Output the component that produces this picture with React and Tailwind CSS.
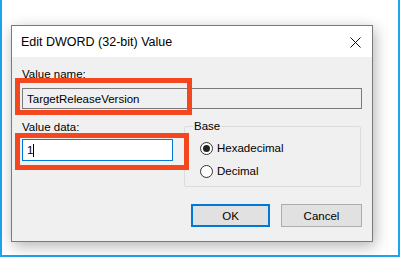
import React from "react";

function Radio({ checked, label }) {
  return (
    <div className="flex items-center h-[20px] gap-[4px]">
      <span className="w-[13px] h-[13px] rounded-full border border-[#333] bg-white flex items-center justify-center">
        {checked && <span className="w-[7px] h-[7px] rounded-full bg-[#222]" />}
      </span>
      <span>{label}</span>
    </div>
  );
}

export default function App() {
  return (
    <div
      className="relative w-[400px] h-[257px] bg-white border-l-2 border-r-2 border-b-2 border-[#1ea4e8] pl-[9px] pt-[25px] text-black text-[11.5px] leading-[14px]"
      style={{ fontFamily: '"Liberation Sans", Arial, sans-serif' }}
    >
      <div className="w-[362px] h-[217px] border border-[#7a7a7a] flex flex-col shadow-[2px_4px_14px_rgba(0,0,0,0.3)]">
        {/* title bar */}
        <div className="h-[31px] bg-white flex items-center justify-between pl-[9px] pr-[11px]">
          <span className="text-[12.5px]">Edit DWORD (32-bit) Value</span>
          <svg width="11" height="11" viewBox="0 0 11 11" className="mt-[1px]">
            <path d="M0.5 0.5 L10.5 10.5 M10.5 0.5 L0.5 10.5" stroke="#111" strokeWidth="1" fill="none" />
          </svg>
        </div>

        {/* body */}
        <div className="flex-1 bg-[#f0f0f0] px-[10px] pt-[10px]">
          <div>Value name:</div>
          <div className="mt-[7px] h-[21px] border border-[#7a7a7a] bg-[#f0f0f0] flex items-center pl-[4px]">
            TargetReleaseVersion
          </div>

          <div className="flex mt-[11px]">
            <div className="w-[162px]">
              <div>Value data:</div>
              <div className="mt-[5px] w-[151px] h-[22px] border border-[#0078d7] bg-white flex items-center pl-[4px]">
                <span>1</span>
                <span className="w-[1px] h-[13px] bg-black" />
              </div>
            </div>
            <div className="relative mt-[6px] w-[177px] h-[61px] border border-[#dcdcdc] rounded-[2px] pl-[15px] pt-[11px] flex flex-col gap-[3px]">
              <span className="absolute left-[8px] top-[-8px] bg-[#f0f0f0] px-[1px]">Base</span>
              <Radio checked label="Hexadecimal" />
              <Radio label="Decimal" />
            </div>
          </div>

          <div className="flex justify-end gap-[11px] mt-[17px]">
            <button className="w-[79px] h-[23px] border-2 border-[#0078d7] bg-[#e1e1e1] flex items-center justify-center">
              OK
            </button>
            <button className="w-[81px] h-[23px] border border-[#adadad] bg-[#e1e1e1] flex items-center justify-center">
              Cancel
            </button>
          </div>
        </div>
      </div>

      {/* annotation boxes */}
      <div className="absolute left-[13px] top-[78px] w-[177px] h-[37px] border-[5px] border-[#f4461f]" />
      <div className="absolute left-[13px] top-[133px] w-[174px] h-[37px] border-[5px] border-[#f4461f]" />
    </div>
  );
}
